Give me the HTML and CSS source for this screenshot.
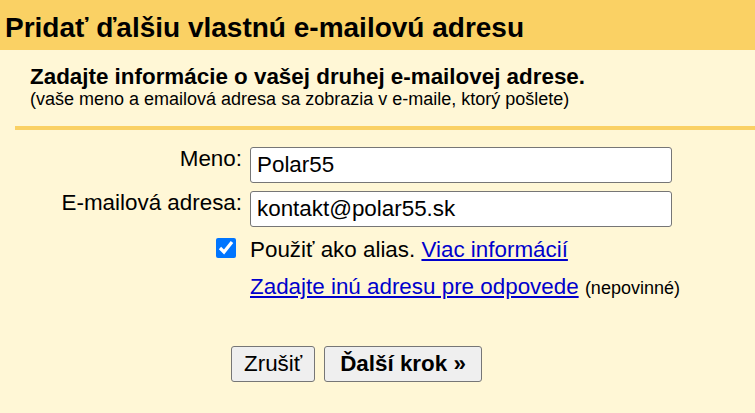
FILE: index.html
```html
<!DOCTYPE html>
<html lang="sk">
<head>
  <meta charset="UTF-8">
  <meta name="viewport" content="width=device-width, initial-scale=1.0">
  <title>Pridať ďalšiu vlastnú e-mailovú adresu</title>
  <link rel="stylesheet" href="styles.css">
</head>
<body>
  <div class="title-bar">
    <h1>Pridať ďalšiu vlastnú e-mailovú adresu</h1>
  </div>

  <div class="intro">
    <h2>Zadajte informácie o vašej druhej e-mailovej adrese.</h2>
    <p>(vaše meno a emailová adresa sa zobrazia v e-maile, ktorý pošlete)</p>
  </div>

  <div class="divider"></div>

  <form class="form" onsubmit="return false">
    <label class="label" for="name">Meno:</label>
    <input class="field" id="name" type="text" value="Polar55">

    <label class="label" for="email">E-mailová adresa:</label>
    <input class="field" id="email" type="text" value="kontakt@polar55.sk">

    <input class="check" id="alias" type="checkbox" checked>
    <div class="text-row">
      <label for="alias">Použiť ako alias.</label>
      <a href="#">Viac informácií</a>
    </div>

    <div></div>
    <div class="text-row text-row-reply">
      <a href="#">Zadajte inú adresu pre odpovede</a>
      <span class="note">(nepovinné)</span>
    </div>
  </form>

  <div class="actions">
    <button class="btn" type="button">Zrušiť</button>
    <button class="btn btn-primary" type="button">Ďalší krok »</button>
  </div>
</body>
</html>
```

FILE: styles.css
```css
* { margin: 0; padding: 0; box-sizing: border-box; }

body {
  font-family: "Liberation Sans", Arial, sans-serif;
  background-color: #fff7d6;
  color: #000;
  font-size: 22.4px;
  min-height: 100vh;
}

.title-bar {
  background-color: #fad164;
  height: 50px;
  padding: 11px 5px 5px;
}

.title-bar h1 {
  font-size: 28px;
  line-height: 34px;
  font-weight: bold;
}

.intro {
  padding: 15px 0 0 30px;
}

.intro h2 {
  font-size: 22.4px;
  line-height: 24px;
  font-weight: bold;
}

.intro p {
  font-size: 18px;
  line-height: 20px;
}

.divider {
  height: 4px;
  margin: 17px 0 0 15px;
  background-color: #fad164;
}

.form {
  display: grid;
  grid-template-columns: 242px 422px;
  column-gap: 8px;
  row-gap: 8px;
  margin-top: 17px;
}

.label {
  justify-self: end;
  align-self: start;
  line-height: 24px;
}

.field {
  height: 36px;
  padding: 0 6px;
  font-family: inherit;
  font-size: 22.4px;
  color: #000;
  background: #fff;
  border: 1px solid #767676;
  border-radius: 3px;
  outline: none;
}

.check {
  justify-self: end;
  width: 20px;
  height: 20px;
  margin: 3px 6px 0 0;
  accent-color: #0075ff;
}

.text-row {
  margin-top: 3px;
  line-height: 24px;
  white-space: nowrap;
}

.text-row-reply {
  margin-top: 5px;
}

.text-row a {
  color: #0000cc;
}

.note {
  font-size: 18px;
}

.actions {
  display: flex;
  gap: 9px;
  padding: 46px 0 0 231px;
}

.btn {
  height: 36px;
  padding: 0 12px;
  font-family: inherit;
  font-size: 22.4px;
  color: #000;
  background-color: #efefef;
  border: 1px solid #767676;
  border-radius: 3px;
  cursor: pointer;
}

.btn-primary {
  padding: 0 15px;
  font-weight: bold;
}
```
